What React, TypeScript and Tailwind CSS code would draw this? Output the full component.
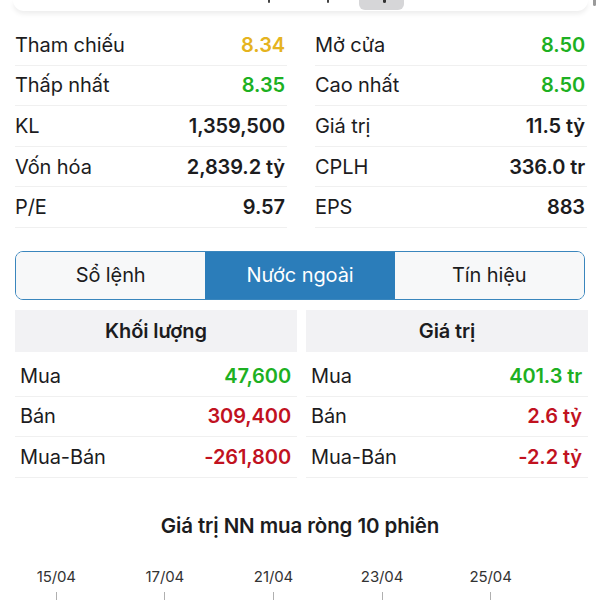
import type { ReactNode } from 'react';

type Tone = 'ref' | 'up' | 'down' | 'plain';

const TONE: Record<Tone, string> = {
  ref: 'text-[#e5b320]',
  up: 'text-[#1db022]',
  down: 'text-[#c1121f]',
  plain: 'text-[#1c1c1e]',
};

const STATS: [string, string, Tone][][] = [
  [
    ['Tham chiếu', '8.34', 'ref'],
    ['Mở cửa', '8.50', 'up'],
  ],
  [
    ['Thấp nhất', '8.35', 'up'],
    ['Cao nhất', '8.50', 'up'],
  ],
  [
    ['KL', '1,359,500', 'plain'],
    ['Giá trị', '11.5 tỷ', 'plain'],
  ],
  [
    ['Vốn hóa', '2,839.2 tỷ', 'plain'],
    ['CPLH', '336.0 tr', 'plain'],
  ],
  [
    ['P/E', '9.57', 'plain'],
    ['EPS', '883', 'plain'],
  ],
];

const VOLUME: [string, string, Tone][] = [
  ['Mua', '47,600', 'up'],
  ['Bán', '309,400', 'down'],
  ['Mua-Bán', '-261,800', 'down'],
];

const VALUE: [string, string, Tone][] = [
  ['Mua', '401.3 tr', 'up'],
  ['Bán', '2.6 tỷ', 'down'],
  ['Mua-Bán', '-2.2 tỷ', 'down'],
];

const DATES = ['15/04', '17/04', '21/04', '23/04', '25/04'];

function Row({ label, value, tone, className = '' }: { label: string; value: string; tone: Tone; className?: string }) {
  return (
    <div className={`flex h-[40.6px] items-center justify-between border-b border-[#f0f0f0] ${className}`}>
      <span className="text-[20px] text-[#1c1c1e]">{label}</span>
      <span className={`text-[20px] font-semibold ${TONE[tone]}`}>{value}</span>
    </div>
  );
}

function Tab({ children, active = false }: { children: ReactNode; active?: boolean }) {
  return (
    <div
      className={`flex flex-1 items-center justify-center text-[20px] ${
        active ? 'bg-[#2b7dba] text-white' : 'bg-[#f7f8f9] text-[#1c1c1e]'
      }`}
    >
      {children}
    </div>
  );
}

function Section({ title, rows }: { title: string; rows: [string, string, Tone][] }) {
  return (
    <div>
      <div className="flex h-[42px] items-center justify-center bg-[#f2f2f4] text-[20px] font-semibold text-[#1c1c1e]">
        {title}
      </div>
      <div className="pt-[4px]">
        {rows.map(([label, value, tone]) => (
          <Row key={label} label={label} value={value} tone={tone} className="pl-[5px] pr-[6px]" />
        ))}
      </div>
    </div>
  );
}

export default function App() {
  return (
    <div className="h-[600px] w-[600px] overflow-hidden bg-white font-['Inter',sans-serif] tracking-[-0.1px]">
      {/* bottom edge of the price chart card above, scrolled mostly out of view */}
      <div className="flex h-[11px] pl-[13px]">
        <div className="flex h-full w-[575px] items-start rounded-b-xl bg-white shadow-[0_3px_5px_rgba(0,0,0,0.07)]">
          <div className="ml-[255px] h-[3px] w-[2px] rounded-b-full bg-[#444]" />
          <div className="ml-[57px] h-[3px] w-[2px] rounded-b-full bg-[#444]" />
          <div className="ml-[30px] flex h-[10px] w-[45px] justify-center rounded-b-md bg-[#d6d6d8]">
            <div className="ml-[6px] h-[3px] w-[3px] rounded-b-full bg-[#333]" />
          </div>
        </div>
        <div className="ml-[5px] h-[6px] w-[3px] rounded-b-full bg-[#9a9a9a]" />
      </div>

      <div className="grid grid-cols-[272px_272px] gap-x-[28px] px-[15px] pt-[14px]">
        {STATS.flatMap((pair) =>
          pair.map(([label, value, tone]) => (
            <Row key={label} label={label} value={value} tone={tone} className="pr-[2px]" />
          )),
        )}
      </div>

      <div className="mx-[15px] mt-[23px] flex h-[49px] overflow-hidden rounded-lg border-[1.5px] border-[#3a86bd]">
        <Tab>Sổ lệnh</Tab>
        <Tab active>Nước ngoài</Tab>
        <Tab>Tín hiệu</Tab>
      </div>

      <div className="mt-[10px] grid grid-cols-[282px_282px] gap-x-[9px] pl-[15px]">
        <Section title="Khối lượng" rows={VOLUME} />
        <Section title="Giá trị" rows={VALUE} />
      </div>

      <div className="mt-[33px] text-center text-[20.5px] font-semibold text-[#1c1c1e]">
        Giá trị NN mua ròng 10 phiên
      </div>

      <div className="mt-[24px] flex pl-[2px]">
        {DATES.map((d) => (
          <div key={d} className="flex w-[108.6px] flex-col items-center">
            <span className="text-[15px] text-[#333333]">{d}</span>
            <div className="mt-[4px] h-[20px] w-px bg-[#b0b0b0]" />
          </div>
        ))}
      </div>
    </div>
  );
}
